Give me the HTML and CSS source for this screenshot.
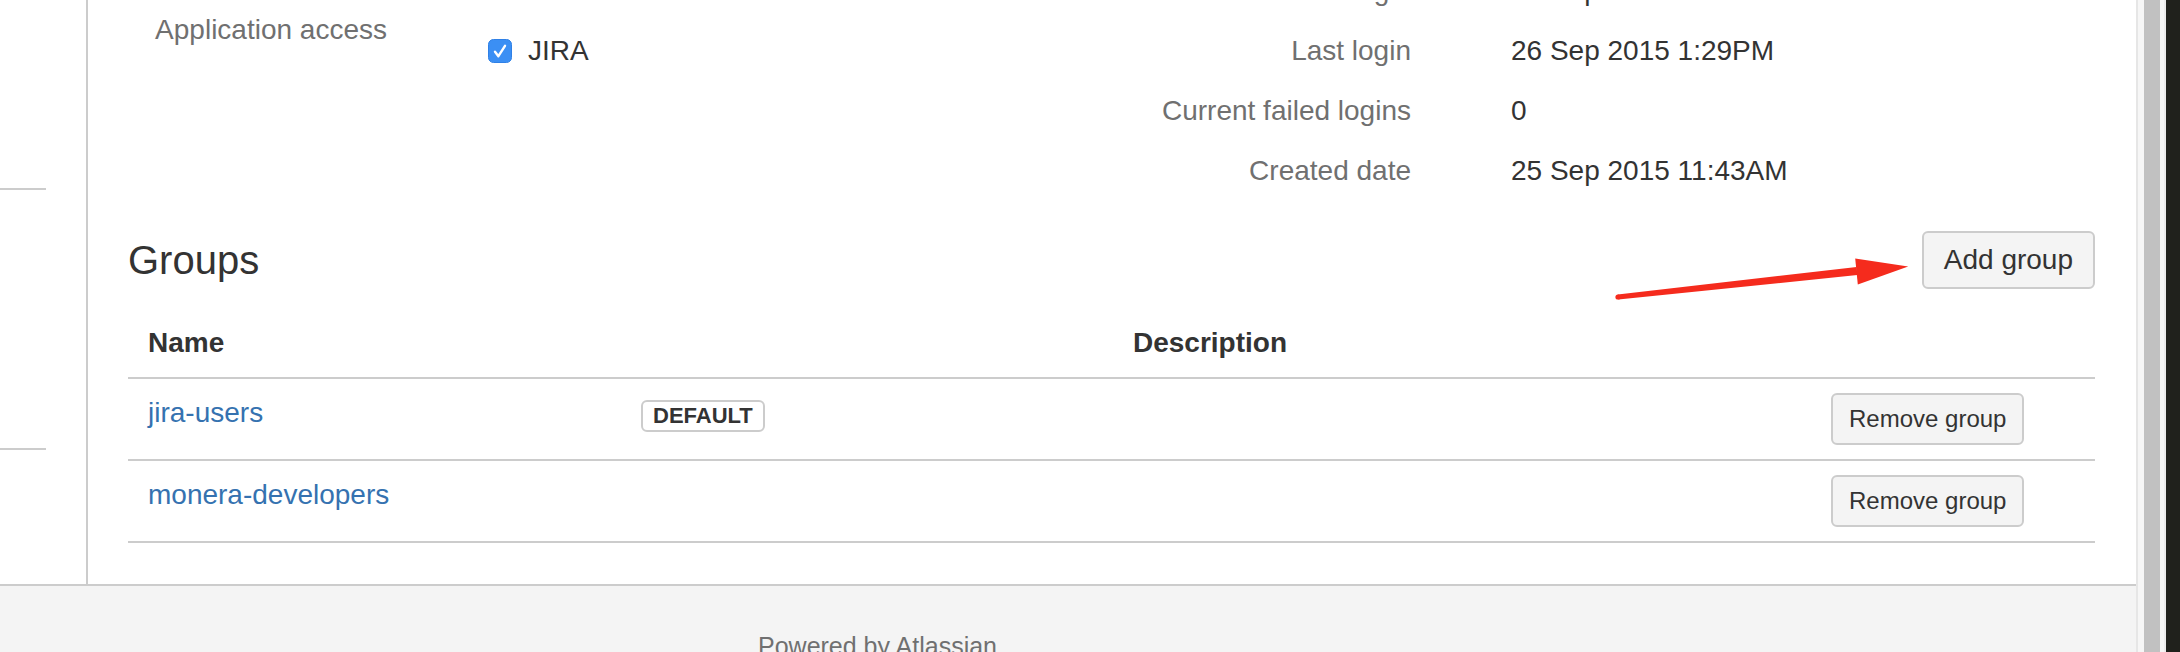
FILE: index.html
```html
<!DOCTYPE html>
<html lang="en">
<head>
<meta charset="utf-8">
<title>User details - Groups</title>
<link rel="stylesheet" href="styles.css">
</head>
<body>
<div class="window">
  <div class="viewport">
    <div class="main-area">
      <aside class="sidebar">
        <div class="nav-sep nav-sep-1"></div>
        <div class="nav-sep nav-sep-2"></div>
      </aside>
      <main class="content">
        <section class="details">
          <div class="details-col">
            <div class="field-group">
              <div class="field-label">Application access</div>
              <div class="app-access">
                <span class="checkbox">
                  <svg viewBox="0 0 24 24" width="24" height="24" aria-hidden="true">
                    <rect x="0.5" y="0.5" width="23" height="23" rx="5" fill="#3b8ff4" stroke="#2f80e6"/>
                    <path d="M7 12.8 L10.4 17.2 L17 6.8" fill="none" stroke="#fff" stroke-width="2.4" stroke-linecap="round" stroke-linejoin="round"/>
                  </svg>
                </span>
                <span class="app-name">JIRA</span>
              </div>
            </div>
          </div>
          <dl class="meta">
            <div class="meta-row"><dt>Previous login</dt><dd>26 Sep 2015 11:02AM</dd></div>
            <div class="meta-row"><dt>Last login</dt><dd>26 Sep 2015 1:29PM</dd></div>
            <div class="meta-row"><dt>Current failed logins</dt><dd>0</dd></div>
            <div class="meta-row"><dt>Created date</dt><dd>25 Sep 2015 11:43AM</dd></div>
          </dl>
        </section>

        <section class="groups">
          <div class="groups-header">
            <h2>Groups</h2>
            <button class="btn btn-add" type="button">Add group</button>
          </div>
          <table class="groups-table">
            <colgroup>
              <col class="col-name">
              <col class="col-flag">
              <col class="col-desc">
              <col class="col-actions">
            </colgroup>
            <thead>
              <tr>
                <th>Name</th>
                <th></th>
                <th>Description</th>
                <th></th>
              </tr>
            </thead>
            <tbody>
              <tr>
                <td><a class="group-link" href="#">jira-users</a></td>
                <td><span class="lozenge">Default</span></td>
                <td></td>
                <td><button class="btn btn-remove" type="button">Remove group</button></td>
              </tr>
              <tr>
                <td><a class="group-link" href="#">monera-developers</a></td>
                <td></td>
                <td></td>
                <td><button class="btn btn-remove" type="button">Remove group</button></td>
              </tr>
            </tbody>
          </table>
        </section>
      </main>
    </div>
    <footer class="footer">Powered by Atlassian</footer>
  </div>
  <div class="scrollbar"><div class="scroll-thumb"></div></div>
  <div class="desk-edge"></div>

  <svg class="annotation-arrow" viewBox="0 0 320 70" width="320" height="70" aria-hidden="true">
    <circle cx="18" cy="57" r="2.6" fill="#f52b1d"/>
    <polygon points="18.3,59.6 17.7,54.4 256.6,27 257.4,35" fill="#f52b1d"/>
    <polygon points="255.2,18.4 308.2,26.6 257.8,44.4" fill="#f52b1d"/>
  </svg>
</div>
</body>
</html>
```

FILE: styles.css
```css
* {
  box-sizing: border-box;
}

html,
body {
  margin: 0;
  padding: 0;
}

body {
  font-family: "Liberation Sans", Arial, sans-serif;
  font-size: 28px;
  color: #333;
  background: #fff;
  overflow: hidden;
}

.window {
  position: relative;
  display: flex;
  width: 2180px;
  height: 652px;
  overflow: hidden;
}

.viewport {
  flex: 1;
  min-width: 0;
  display: flex;
  flex-direction: column;
}

.main-area {
  flex: none;
  height: 584px;
  display: flex;
  overflow: hidden;
  background: #fff;
}

/* left navigation column */
.sidebar {
  flex: none;
  width: 88px;
  border-right: 2px solid #ccc;
  display: flex;
  flex-direction: column;
}

.nav-sep {
  width: 46px;
  height: 2px;
  background: #ccc;
}

.nav-sep-1 {
  margin-top: 188px;
}

.nav-sep-2 {
  margin-top: 258px;
}

/* content panel */
.content {
  flex: 1;
  min-width: 0;
  padding: 0 41px 0 40px;
}

.details {
  display: grid;
  grid-template-columns: 983px 1fr;
  margin-top: -39px;
}

.field-group {
  display: grid;
  grid-template-columns: 259px 1fr;
  column-gap: 101px;
  padding-top: 49px;
  line-height: 40px;
}

.field-label {
  text-align: right;
  color: #707070;
}

.app-access {
  padding-top: 21px;
  display: flex;
  align-items: center;
  gap: 16px;
}

.checkbox {
  display: block;
  width: 24px;
  height: 24px;
}

.checkbox svg {
  display: block;
}

.app-name {
  color: #333;
}

.meta {
  margin: 0;
}

.meta-row {
  display: grid;
  grid-template-columns: 300px 1fr;
  column-gap: 100px;
  padding: 10px 0;
  line-height: 40px;
}

.meta-row dt {
  text-align: right;
  color: #707070;
}

.meta-row dd {
  margin: 0;
  color: #333;
}

/* groups */
.groups-header {
  display: flex;
  align-items: center;
  justify-content: space-between;
  margin-top: 30px;
}

.groups-header h2 {
  margin: 0;
  font-size: 40px;
  font-weight: normal;
  line-height: 58px;
  color: #333;
}

.btn {
  font-family: inherit;
  color: #333;
  background: #f4f4f4;
  border: 2px solid #ccc;
  border-radius: 6px;
  cursor: pointer;
  white-space: nowrap;
}

.btn-add {
  font-size: 28px;
  height: 58px;
  padding: 0 20px;
  line-height: 54px;
}

.btn-remove {
  font-size: 24px;
  height: 52px;
  padding: 0 16px;
  line-height: 48px;
  display: block;
}

.groups-table {
  width: 100%;
  border-collapse: collapse;
  table-layout: fixed;
  margin-top: 20px;
}

.col-name {
  width: 493px;
}

.col-flag {
  width: 492px;
}

.col-desc {
  width: 698px;
}

.col-actions {
  width: 284px;
}

.groups-table th,
.groups-table td {
  padding: 14px 20px;
  line-height: 40px;
  text-align: left;
  vertical-align: top;
  border-bottom: 2px solid #ccc;
}

.groups-table th {
  font-weight: bold;
  color: #333;
}

.group-link {
  color: #3572b0;
  text-decoration: none;
}

.lozenge {
  display: inline-block;
  vertical-align: top;
  margin-top: 7px;
  padding: 0 10px;
  border: 2px solid #ccc;
  border-radius: 6px;
  font-size: 22px;
  font-weight: bold;
  line-height: 28px;
  text-transform: uppercase;
  color: #333;
  background: #fff;
}

/* footer */
.footer {
  flex: 1;
  background: #f4f4f4;
  border-top: 2px solid #ccc;
  padding: 48px 0 0 758px;
  font-size: 25px;
  line-height: 25px;
  color: #707070;
}

/* window chrome */
.scrollbar {
  flex: none;
  width: 30px;
  background: #f6f6f6;
  border-left: 2px solid #e6e6e6;
  border-right: 2px solid #ececec;
  padding: 0 4px 0 6px;
}

.scroll-thumb {
  width: 16px;
  height: 100%;
  background: #c1c1c1;
}

.desk-edge {
  flex: none;
  width: 14px;
  background: #20211c;
}

.annotation-arrow {
  position: absolute;
  left: 1600px;
  top: 240px;
  width: 320px;
  height: 70px;
}
```
